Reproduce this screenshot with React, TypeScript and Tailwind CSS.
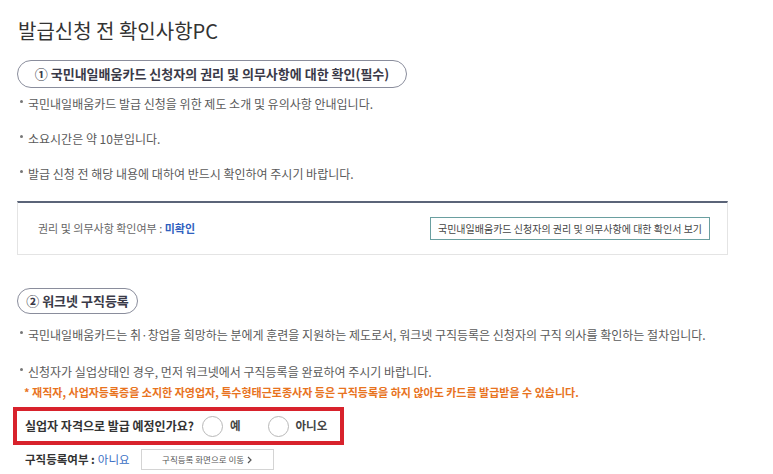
import React from 'react';

const Bullet: React.FC<{ children: React.ReactNode }> = ({ children }) => (
    <li className="flex items-start">
        <span className="mt-[6px] mr-[5px] ml-[3px] h-[3px] w-[3px] shrink-0 rounded-full bg-[#777]"></span>
        <span>{children}</span>
    </li>
);

const Radio: React.FC<{ label: string }> = ({ label }) => (
    <label className="flex items-center">
        <span className="h-[21px] w-[21px] rounded-full border border-[#b8b8b8] bg-white"></span>
        <span className="ml-[7px] text-[11.5px] font-bold text-[#444]">{label}</span>
    </label>
);

const App: React.FC = () => {
    return (
        <div
            className="h-[474px] w-[773px] overflow-hidden bg-white pl-[17px] pt-[16px] text-[#5a5a5a]"
            style={{ fontFamily: '"Noto Sans CJK KR", "Noto Sans", sans-serif' }}
        >
            <h1 className="pl-[1px] text-[20px] leading-[30px] text-[#333]">발급신청 전 확인사항PC</h1>

            <div className="mt-[14px] flex h-[28px] w-[390px] items-center justify-center rounded-full border border-[#8a8d9c] text-[13px] font-bold text-[#3a3a48]">
                ① 국민내일배움카드 신청자의 권리 및 의무사항에 대한 확인(필수)
            </div>

            <ul className="mt-[6px] space-y-[15px] text-[12px] leading-[20px]">
                <Bullet>국민내일배움카드 발급 신청을 위한 제도 소개 및 유의사항 안내입니다.</Bullet>
                <Bullet>소요시간은 약 10분입니다.</Bullet>
                <Bullet>발급 신청 전 해당 내용에 대하여 반드시 확인하여 주시기 바랍니다.</Bullet>
            </ul>

            <div className="mt-[17px] flex h-[54px] w-[711px] items-center justify-between border border-[#e4e4e4] border-t-2 border-t-[#5b6478] pl-[20px] pr-[17px]">
                <div className="text-[11px] text-[#666]">
                    권리 및 의무사항 확인여부 : <span className="font-bold text-[#2f5fbf]">미확인</span>
                </div>
                <button className="h-[23px] w-[280px] border border-[#6a9fa0] bg-white text-[10px] text-[#444]">
                    국민내일배움카드 신청자의 권리 및 의무사항에 대한 확인서 보기
                </button>
            </div>

            <div className="mt-[33px] flex h-[26px] w-[121px] items-center justify-center rounded-full border border-[#8a8d9c] text-[13px] font-bold text-[#3a3a48]">
                ② 워크넷 구직등록
            </div>

            <ul className="mt-[11px] text-[12px] leading-[20px]">
                <Bullet>국민내일배움카드는 취·창업을 희망하는 분에게 훈련을 지원하는 제도로서, 워크넷 구직등록은 신청자의 구직 의사를 확인하는 절차입니다.</Bullet>
                <li className="mt-[17px]">
                    <div className="flex items-start">
                        <span className="mt-[6px] mr-[5px] ml-[3px] h-[3px] w-[3px] shrink-0 rounded-full bg-[#777]"></span>
                        <span>신청자가 실업상태인 경우, 먼저 워크넷에서 구직등록을 완료하여 주시기 바랍니다.</span>
                    </div>
                </li>
            </ul>
            <p className="mt-[1px] ml-[7px] text-[11px] font-semibold leading-[18px] text-[#e8731e]">
                * 재직자, 사업자등록증을 소지한 자영업자, 특수형태근로종사자 등은 구직등록을 하지 않아도 카드를 발급받을 수 있습니다.
            </p>

            <div className="mt-[6px] -ml-[4px] flex h-[38px] w-[331px] items-center border-4 border-[#d8222c] pl-[8px]">
                <span className="text-[12px] font-bold text-[#333]">실업자 자격으로 발급 예정인가요?</span>
                <div className="ml-[8px] flex items-center gap-[27px]">
                    <Radio label="예" />
                    <Radio label="아니오" />
                </div>
            </div>

            <div className="mt-[4px] flex items-center pl-[8px]">
                <span className="text-[11.5px] font-bold text-[#333]">구직등록여부 :</span>
                <span className="ml-[3px] text-[11.5px] text-[#3a6fc4]">아니요</span>
                <button className="ml-[11px] flex h-[21px] w-[133px] items-center justify-center border border-[#d4d4d4] bg-white text-[8.5px] text-[#555]">
                    구직등록 화면으로 이동
                    <svg className="ml-[3px]" width="5" height="8" viewBox="0 0 5 8">
                        <path d="M1 1l3 3-3 3" fill="none" stroke="#555" strokeWidth="1.2" />
                    </svg>
                </button>
            </div>
        </div>
    );
};

export default App;
